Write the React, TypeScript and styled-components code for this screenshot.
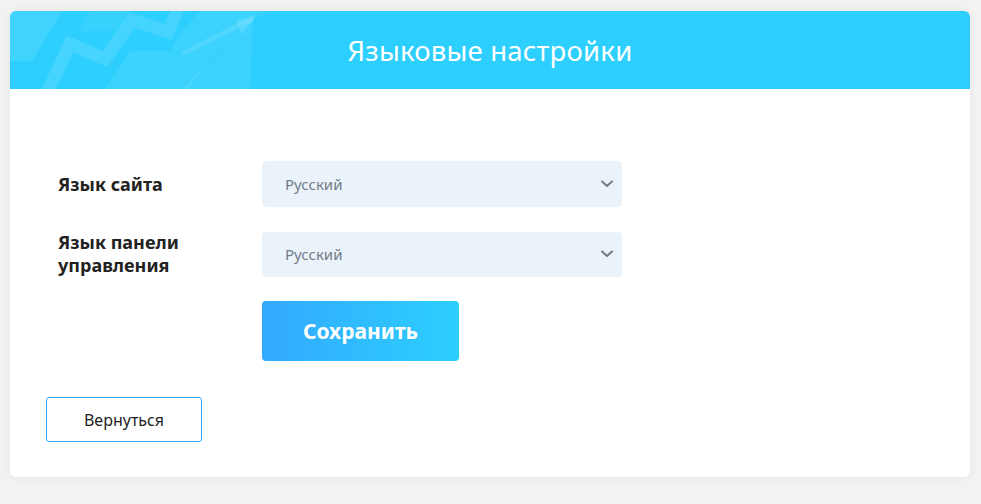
import React from "react";
import styled, { createGlobalStyle } from "styled-components";

const Global = createGlobalStyle`
  html, body { margin: 0; padding: 0; background: #f2f2f2; }
  body { font-family: "Noto Sans", "Open Sans", Arial, sans-serif; }
  * { box-sizing: border-box; }
`;

const Page = styled.div`
  padding: 11px 11px 27px 10px;
  width: 981px;
  height: 504px;
`;

const Card = styled.div`
  background: #fff;
  border-radius: 6px;
  box-shadow: 0 0 8px rgba(0, 0, 0, 0.06);
  overflow: hidden;
  height: 466px;
  display: flex;
  flex-direction: column;
`;

const Header = styled.div`
  position: relative;
  flex-shrink: 0;
  height: 78px;
  background: #2dcffe;
  display: flex;
  align-items: center;
  justify-content: center;
`;

const HeaderArt = styled.svg`
  position: absolute;
  left: 0;
  top: 0;
`;

const Title = styled.h1`
  position: relative;
  margin: 0;
  color: #fff;
  font-weight: 400;
  font-size: 27.5px;
  letter-spacing: 0.2px;
`;

const Body = styled.div`
  padding: 72px 36px 35px;
  display: flex;
  flex-direction: column;
`;

const Form = styled.div`
  padding-left: 12px;
  display: flex;
  flex-direction: column;
  gap: 24px;
`;

const Row = styled.div`
  display: flex;
  align-items: center;
`;

const Label = styled.div`
  width: 204px;
  font-size: 18px;
  font-weight: 700;
  color: #222;
  line-height: 23px;
`;

const SelectBox = styled.div<{ $h: number }>`
  width: 360px;
  height: ${(p) => p.$h}px;
  background: #eaf2fa;
  border-radius: 4px;
  display: flex;
  align-items: center;
  justify-content: space-between;
  padding: 0 8px 0 23px;
  font-size: 15px;
  color: #737d88;
`;

const Chevron = () => (
  <svg width="14" height="14" viewBox="0 0 14 14">
    <path d="M2 4.5 L7 9 L12 4.5" fill="none" stroke="#737b84" strokeWidth="2" strokeLinecap="round" strokeLinejoin="round" />
  </svg>
);

const SaveRow = styled.div`
  padding-left: 204px;
`;

const SaveButton = styled.button`
  width: 197px;
  height: 60px;
  border: 0;
  border-radius: 4px;
  background: linear-gradient(90deg, #33a9ff 0%, #2ccffe 100%);
  color: #fff;
  font-family: inherit;
  font-size: 21px;
  font-weight: 700;
  cursor: pointer;
`;

const BackButton = styled.button`
  margin-top: 36px;
  width: 156px;
  height: 45px;
  background: #fff;
  border: 1px solid #38a6f3;
  border-radius: 3px;
  color: #222;
  font-family: inherit;
  font-size: 16px;
  cursor: pointer;
`;

export default function App() {
  return (
    <>
      <Global />
      <Page>
        <Card>
          <Header>
            <HeaderArt width="300" height="78" viewBox="0 0 300 78">
              <polygon points="0,0 52,0 22,50 0,50" fill="#fff" opacity="0.09" />
              <polygon points="95,78 120,40 160,40 172,20 190,0 258,0 245,8 200,48 178,78" fill="#fff" opacity="0.07" />
              <polyline points="38,80 60,33 95,48 122,9 158,21 168,-2" fill="none" stroke="#fff" strokeWidth="13" opacity="0.11" strokeLinejoin="miter" />
              <polygon points="172,78 243,7 240,78" fill="#fff" opacity="0.08" />
              <polyline points="172,43 243,7" fill="none" stroke="#fff" strokeWidth="5" opacity="0.11" />
              <polygon points="246,4 232,24 226,10" fill="#fff" opacity="0.11" />
              <polygon points="80,0 120,0 105,20 70,20" fill="#fff" opacity="0.06" />
            </HeaderArt>
            <Title>Языковые настройки</Title>
          </Header>
          <Body>
            <Form>
              <Row>
                <Label>Язык сайта</Label>
                <SelectBox $h={46}>
                  <span>Русский</span>
                  <Chevron />
                </SelectBox>
              </Row>
              <Row>
                <Label>
                  Язык панели
                  <br />
                  управления
                </Label>
                <SelectBox $h={45}>
                  <span>Русский</span>
                  <Chevron />
                </SelectBox>
              </Row>
              <SaveRow>
                <SaveButton>Сохранить</SaveButton>
              </SaveRow>
            </Form>
            <BackButton>Вернуться</BackButton>
          </Body>
        </Card>
      </Page>
    </>
  );
}
